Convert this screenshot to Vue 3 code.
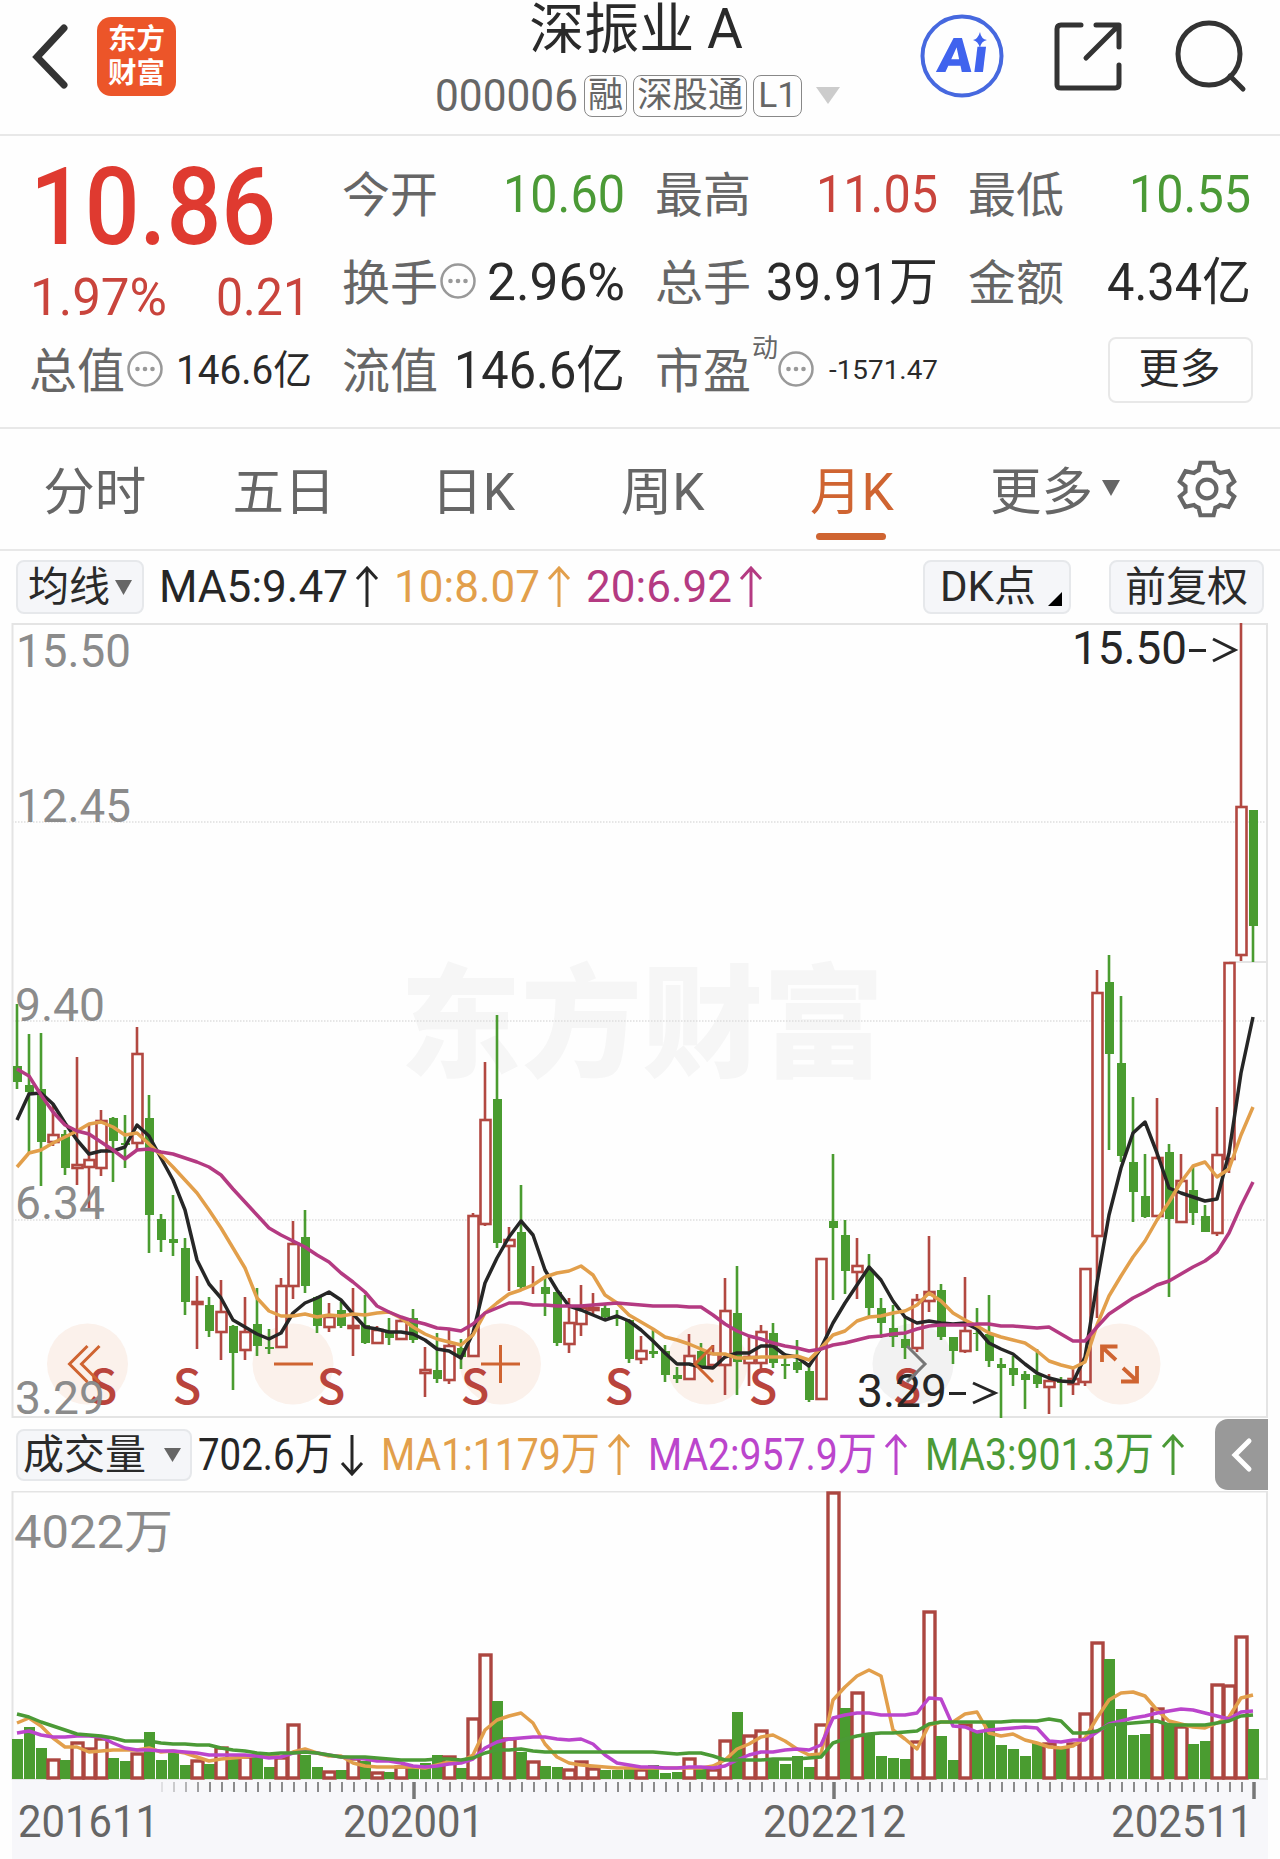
<script setup>
import { h } from 'vue';

// single line of text squeezed to an exact width
const FitText = (props) =>
  h('svg', { width: props.w, height: props.size * 1.2, class: 'fit' }, [
    h(
      'text',
      {
        x: 0,
        y: props.size * 0.955,
        'font-size': props.size,
        'font-weight': props.weight || 400,
        textLength: props.w,
        lengthAdjust: 'spacingAndGlyphs',
        fill: 'currentColor',
      },
      props.text
    ),
  ]);
FitText.props = ['text', 'w', 'size', 'weight'];

const Arrow = (props) =>
  h('svg', { width: 24, height: 42, viewBox: '0 0 24 42', class: 'arrow' }, [
    h('path', {
      d: props.down ? 'M12 1V39M2 29L12 40L22 29' : 'M12 41V3M2 13L12 2L22 13',
      fill: 'none',
      stroke: 'currentColor',
      'stroke-width': 3,
    }),
  ]);
Arrow.props = { down: Boolean };

const tabs = ['分时', '五日', '日K', '周K', '月K'];

const columns = [
  [
    { label: '今开', value: '10.60', w: 122, tone: 'green' },
    { label: '换手', value: '2.96%', w: 138, dots: true },
    { label: '流值', value: '146.6亿', w: 171 },
  ],
  [
    { label: '最高', value: '11.05', w: 122, tone: 'red' },
    { label: '总手', value: '39.91万', w: 172 },
    { label: '市盈', sup: '动', value: '-1571.47', w: 109, size: 26, dots: true },
  ],
  [
    { label: '最低', value: '10.55', w: 122, tone: 'green' },
    { label: '金额', value: '4.34亿', w: 144 },
    { more: true },
  ],
];

const averages = [
  { text: 'MA5:9.47', w: 189, tone: 'black' },
  { text: '10:8.07', w: 146, tone: 'orange' },
  { text: '20:6.92', w: 146, tone: 'magenta' },
];

const volumes = [
  { text: '702.6万', w: 135, tone: 'black', down: true },
  { text: 'MA1:1179万', w: 219, tone: 'orange' },
  { text: 'MA2:957.9万', w: 229, tone: 'purple' },
  { text: 'MA3:901.3万', w: 229, tone: 'green' },
];

// up (1) / down (0), high, body top, body bottom, low
const candles = [
  [0, 1004, 1066, 1082, 1089], [0, 1034, 1085, 1092, 1153], [0, 1033, 1089, 1142, 1186], [1, 1104, 1135, 1142, 1146],
  [0, 1130, 1134, 1168, 1175], [1, 1057, 1165, 1168, 1185], [1, 1125, 1160, 1167, 1210], [1, 1110, 1121, 1168, 1176],
  [0, 1117, 1118, 1141, 1182], [0, 1115, 1143, 1145, 1168], [1, 1027, 1054, 1143, 1150], [0, 1095, 1118, 1215, 1253],
  [0, 1214, 1219, 1240, 1252], [0, 1195, 1239, 1243, 1256], [0, 1238, 1248, 1302, 1315], [1, 1276, 1302, 1304, 1349],
  [0, 1297, 1305, 1331, 1337], [1, 1280, 1312, 1332, 1360], [0, 1325, 1326, 1353, 1390], [1, 1297, 1332, 1350, 1360],
  [0, 1288, 1324, 1346, 1356], [0, 1329, 1347, 1349, 1354], [1, 1278, 1286, 1347, 1348], [1, 1221, 1244, 1286, 1299],
  [0, 1210, 1237, 1286, 1293], [0, 1296, 1297, 1326, 1333], [1, 1303, 1317, 1327, 1332], [0, 1302, 1310, 1326, 1328],
  [1, 1288, 1326, 1328, 1356], [0, 1295, 1325, 1343, 1344], [1, 1326, 1330, 1343, 1344], [0, 1318, 1333, 1338, 1345],
  [1, 1318, 1321, 1339, 1339], [0, 1309, 1318, 1340, 1343], [1, 1347, 1370, 1373, 1397], [0, 1333, 1370, 1379, 1383],
  [1, 1329, 1346, 1380, 1384], [0, 1339, 1348, 1357, 1369], [1, 1213, 1216, 1356, 1357], [1, 1062, 1120, 1224, 1226],
  [0, 1015, 1099, 1243, 1248], [1, 1227, 1240, 1246, 1291], [0, 1185, 1232, 1287, 1290], [1, 1266, 1286, 1286, 1294],
  [0, 1277, 1287, 1294, 1316], [0, 1290, 1292, 1343, 1346], [1, 1298, 1323, 1344, 1353], [1, 1285, 1308, 1324, 1336],
  [1, 1293, 1308, 1310, 1315], [0, 1303, 1308, 1317, 1320], [0, 1310, 1317, 1319, 1326], [0, 1319, 1320, 1359, 1363],
  [1, 1336, 1351, 1359, 1364], [0, 1328, 1351, 1354, 1358], [0, 1345, 1351, 1375, 1382], [0, 1367, 1375, 1379, 1383],
  [1, 1334, 1356, 1379, 1380], [0, 1343, 1351, 1366, 1367], [1, 1345, 1354, 1365, 1368], [1, 1278, 1311, 1365, 1395],
  [0, 1266, 1313, 1362, 1395], [1, 1335, 1357, 1363, 1386], [1, 1325, 1332, 1363, 1370], [0, 1323, 1333, 1363, 1368],
  [0, 1353, 1364, 1366, 1379], [0, 1340, 1362, 1370, 1373], [0, 1365, 1371, 1400, 1402], [1, 1258, 1259, 1399, 1400],
  [0, 1154, 1221, 1228, 1300], [0, 1220, 1235, 1271, 1294], [1, 1238, 1266, 1272, 1299], [0, 1254, 1270, 1308, 1316],
  [0, 1298, 1308, 1323, 1338], [0, 1305, 1328, 1337, 1347], [0, 1317, 1339, 1348, 1359], [1, 1294, 1300, 1348, 1352],
  [1, 1236, 1292, 1301, 1312], [0, 1284, 1290, 1337, 1340], [0, 1337, 1337, 1351, 1364], [1, 1277, 1331, 1351, 1353],
  [0, 1308, 1333, 1334, 1351], [0, 1295, 1334, 1361, 1367], [0, 1358, 1364, 1368, 1418], [0, 1356, 1368, 1375, 1386],
  [0, 1371, 1374, 1380, 1409], [0, 1349, 1375, 1384, 1388], [1, 1374, 1381, 1387, 1414], [0, 1377, 1381, 1383, 1407],
  [1, 1368, 1379, 1384, 1395], [1, 1268, 1269, 1382, 1386], [1, 970, 993, 1236, 1318], [0, 955, 982, 1054, 1150],
  [0, 996, 1063, 1156, 1162], [0, 1097, 1162, 1192, 1222], [0, 1154, 1196, 1217, 1218], [1, 1098, 1158, 1216, 1217],
  [0, 1144, 1152, 1219, 1297], [1, 1154, 1181, 1222, 1222], [0, 1167, 1190, 1213, 1225], [0, 1205, 1216, 1232, 1232],
  [1, 1107, 1155, 1233, 1236], [1, 962, 963, 1159, 1173], [1, 623, 807, 955, 961], [0, 810, 810, 926, 962],
];

const ma5 = [
  1120, 1094, 1093, 1104, 1123, 1140, 1154, 1151, 1151, 1147, 1125, 1136, 1158, 1180, 1210, 1260, 1284, 1298, 1320, 1327,
  1334, 1339, 1333, 1313, 1303, 1298, 1292, 1300, 1314, 1327, 1329, 1332, 1332, 1334, 1340, 1349, 1351, 1358, 1333, 1283,
  1258, 1237, 1221, 1235, 1270, 1290, 1306, 1310, 1315, 1320, 1316, 1321, 1330, 1341, 1353, 1364, 1364, 1367, 1368, 1357,
  1353, 1353, 1346, 1346, 1355, 1357, 1366, 1348, 1323, 1303, 1285, 1267, 1280, 1301, 1317, 1323, 1321, 1323, 1324, 1323,
  1329, 1343, 1349, 1354, 1364, 1373, 1378, 1381, 1382, 1357, 1283, 1215, 1168, 1133, 1122, 1153, 1188, 1193, 1197, 1201,
  1199, 1153, 1073, 1017,
];
const ma10 = [
  1167, 1153, 1150, 1143, 1137, 1131, 1124, 1122, 1127, 1135, 1133, 1144, 1155, 1167, 1180, 1193, 1210, 1228, 1248, 1268,
  1298, 1311, 1316, 1316, 1314, 1317, 1315, 1316, 1314, 1315, 1313, 1312, 1318, 1327, 1334, 1339, 1342, 1345, 1335, 1313,
  1303, 1294, 1290, 1285, 1277, 1273, 1271, 1266, 1275, 1295, 1303, 1315, 1322, 1329, 1337, 1340, 1344, 1349, 1354, 1354,
  1358, 1358, 1357, 1357, 1357, 1356, 1360, 1348, 1335, 1331, 1321, 1317, 1316, 1313, 1311, 1305, 1293, 1301, 1313, 1320,
  1326, 1333, 1337, 1340, 1343, 1351, 1361, 1365, 1368, 1362, 1325, 1296, 1276, 1257, 1241, 1220, 1202, 1182, 1166, 1162,
  1177, 1169, 1135, 1107,
];
const ma20 = [
  1069, 1076, 1095, 1112, 1125, 1131, 1134, 1142, 1150, 1159, 1150, 1149, 1152, 1154, 1158, 1162, 1167, 1175, 1189, 1202,
  1215, 1228, 1235, 1241, 1247, 1255, 1262, 1273, 1282, 1292, 1306, 1312, 1317, 1321, 1324, 1328, 1329, 1331, 1324, 1313,
  1308, 1303, 1303, 1305, 1305, 1306, 1306, 1306, 1305, 1304, 1303, 1304, 1305, 1306, 1306, 1306, 1307, 1307, 1315, 1324,
  1331, 1336, 1339, 1343, 1346, 1348, 1351, 1349, 1345, 1343, 1340, 1337, 1336, 1334, 1333, 1329, 1326, 1325, 1325, 1325,
  1324, 1324, 1326, 1326, 1327, 1328, 1327, 1334, 1341, 1341, 1327, 1314, 1306, 1298, 1292, 1285, 1281, 1274, 1267, 1261,
  1252, 1233, 1206, 1182,
];

const volumeTops = [
  1739, 1727, 1748, 1760, 1760, 1743, 1749, 1739, 1758, 1761, 1754, 1732, 1760, 1753, 1765, 1761, 1764, 1748, 1757, 1757,
  1756, 1767, 1758, 1725, 1755, 1767, 1772, 1770, 1759, 1761, 1773, 1772, 1767, 1768, 1763, 1755, 1757, 1768, 1719, 1655,
  1701, 1739, 1752, 1762, 1766, 1767, 1770, 1762, 1769, 1770, 1770, 1769, 1770, 1765, 1773, 1772, 1759, 1766, 1770, 1741,
  1712, 1736, 1731, 1758, 1764, 1756, 1767, 1725, 1493, 1708, 1693, 1733, 1756, 1758, 1759, 1742, 1612, 1736, 1760, 1725,
  1732, 1721, 1745, 1749, 1756, 1743, 1744, 1748, 1744, 1714, 1643, 1659, 1709, 1735, 1734, 1709, 1723, 1727, 1744, 1741,
  1685, 1686, 1637, 1729,
];
const volumeUp = [
  3, 5, 6, 7, 10, 15, 17, 19, 22, 23, 26, 28, 30, 32, 36, 38, 39, 41, 43, 46, 47, 48, 52, 56, 58, 59, 61, 62, 67, 68, 70,
  75, 76, 79, 86, 88, 89, 90, 95, 97, 100, 101, 102,
];

const vma1 = [
  1723, 1718, 1726, 1738, 1747, 1747, 1752, 1751, 1750, 1750, 1750, 1748, 1752, 1751, 1753, 1757, 1761, 1759, 1758, 1757,
  1755, 1756, 1757, 1752, 1749, 1753, 1756, 1756, 1763, 1766, 1767, 1767, 1767, 1767, 1768, 1765, 1762, 1762, 1755, 1730,
  1720, 1716, 1713, 1723, 1744, 1757, 1763, 1765, 1766, 1767, 1768, 1768, 1768, 1768, 1768, 1768, 1768, 1768, 1766, 1760,
  1749, 1744, 1737, 1735, 1741, 1749, 1755, 1754, 1700, 1687, 1676, 1670, 1676, 1730, 1739, 1749, 1725, 1722, 1722, 1714,
  1712, 1733, 1736, 1734, 1740, 1743, 1747, 1748, 1746, 1738, 1718, 1700, 1693, 1692, 1696, 1710, 1721, 1724, 1727, 1728,
  1723, 1717, 1698, 1695,
];
const vma2 = [
  1733, 1731, 1735, 1737, 1737, 1736, 1736, 1737, 1743, 1748, 1750, 1750, 1751, 1751, 1752, 1753, 1755, 1755, 1755, 1755,
  1756, 1758, 1757, 1753, 1752, 1753, 1755, 1757, 1758, 1759, 1761, 1761, 1763, 1766, 1767, 1766, 1764, 1763, 1759, 1748,
  1742, 1739, 1738, 1737, 1737, 1739, 1740, 1739, 1744, 1755, 1763, 1765, 1767, 1767, 1768, 1768, 1767, 1767, 1768, 1766,
  1760, 1755, 1752, 1752, 1750, 1749, 1750, 1745, 1718, 1715, 1713, 1713, 1715, 1715, 1715, 1713, 1698, 1699, 1726, 1727,
  1732, 1730, 1729, 1728, 1727, 1728, 1741, 1742, 1740, 1740, 1732, 1724, 1721, 1718, 1716, 1713, 1711, 1709, 1710, 1713,
  1716, 1719, 1712, 1711,
];
const vma3 = [
  1714, 1717, 1722, 1726, 1730, 1734, 1735, 1736, 1738, 1741, 1741, 1741, 1743, 1744, 1744, 1745, 1745, 1748, 1750, 1751,
  1753, 1754, 1753, 1753, 1752, 1753, 1755, 1757, 1757, 1757, 1758, 1759, 1760, 1760, 1760, 1759, 1759, 1760, 1758, 1753,
  1750, 1750, 1749, 1751, 1752, 1752, 1752, 1752, 1752, 1752, 1752, 1752, 1752, 1752, 1753, 1754, 1753, 1753, 1756, 1760,
  1760, 1760, 1760, 1759, 1759, 1759, 1758, 1757, 1743, 1739, 1736, 1734, 1733, 1733, 1732, 1731, 1724, 1722, 1722, 1722,
  1722, 1722, 1722, 1721, 1721, 1721, 1719, 1721, 1733, 1733, 1731, 1725, 1724, 1723, 1722, 1721, 1725, 1725, 1725, 1725,
  1723, 1721, 1716, 1715,
];

const px = (i) => 17 + 12 * i;
const line = (ys) => ys.map((y, i) => `${px(i)},${y}`).join(' ');

const priceLines = [
  { tone: 'black', points: line(ma5) },
  { tone: 'orange', points: line(ma10) },
  { tone: 'magenta', points: line(ma20) },
];
const volumeLines = [
  { tone: 'orange', points: line(vma1) },
  { tone: 'purple', points: line(vma2) },
  { tone: 'green', points: line(vma3) },
];

const scale = [
  { text: '15.50', x: 16, y: 667, w: 115 },
  { text: '12.45', x: 16, y: 822, w: 115 },
  { text: '9.40', x: 15, y: 1021, w: 90 },
  { text: '6.34', x: 15, y: 1219, w: 90 },
  { text: '3.29', x: 15, y: 1414, w: 90 },
];
const sells = [103, 187, 331, 475, 619, 763, 907];
const knobs = [87.5, 293, 500.5, 707, 913, 1120];

const ticks = [];
for (let i = 12; i < 104; i++) {
  ticks.push({
    x: px(i) + 1,
    major: [33, 68, 103].includes(i),
    opacity: Math.min(1, (i - 11) / 5),
  });
}
const dates = [
  { text: '201611', x: 18, w: 141 },
  { text: '202001', x: 343, w: 141 },
  { text: '202212', x: 763, w: 143 },
  { text: '202511', x: 1111, w: 142 },
];
</script>

<template>
  <div class="page">
    <header class="header">
      <div class="side">
        <svg class="back" width="44" height="70" viewBox="0 0 44 70">
          <path d="M37 7L10 36L37 64" />
        </svg>
        <div class="logo"><span>东方</span><span>财富</span></div>
      </div>
      <div class="title">
        <div class="name">深振业 A</div>
        <div class="code">
          <FitText text="000006" :w="143" :size="44" />
          <span class="badge">融</span>
          <span class="badge">深股通</span>
          <span class="badge">L1</span>
          <svg class="caret" width="24" height="17"><path d="M0 0H24L12 17Z" /></svg>
        </div>
      </div>
      <div class="tools">
        <svg width="84" height="86" viewBox="0 0 84 86">
          <circle class="ai-ring" cx="42" cy="43" r="39.5" />
          <g transform="translate(16 59) skewX(-7)">
            <text class="ai" textLength="50" lengthAdjust="spacingAndGlyphs">Aı</text>
          </g>
          <path class="ai-star" d="M60 19Q61 26 67 27Q61 28 60 35Q58 28 53 27Q58 26 60 19Z" />
        </svg>
        <svg class="share" width="72" height="72" viewBox="0 0 72 72">
          <path d="M29 5H9Q5 5 5 9V65Q5 68 9 68H63Q67 68 67 64V45M44 5H67V27M66 6L34 38" />
        </svg>
        <svg class="search" width="76" height="76" viewBox="0 0 76 76">
          <circle cx="37" cy="35" r="31" />
          <path d="M58 57L71 70" />
        </svg>
      </div>
    </header>

    <section class="quote">
      <div class="main">
        <div class="price"><FitText text="10.86" :w="246" :size="107" :weight="500" /></div>
        <div class="change">
          <FitText text="1.97%" :w="137" :size="52" />
          <FitText text="0.21" :w="94" :size="52" />
        </div>
        <div class="cell total">
          <span class="label">总值</span>
          <svg class="dots" width="38" height="38" viewBox="0 0 38 38">
            <circle class="ring" cx="19" cy="19" r="16.5" />
            <circle cx="11.5" cy="19" r="2.3" /><circle cx="19" cy="19" r="2.3" /><circle cx="26.5" cy="19" r="2.3" />
          </svg>
          <FitText class="value" text="146.6亿" :w="136" :size="40" />
        </div>
      </div>
      <div v-for="(col, c) in columns" :key="c" class="col">
        <div v-for="(item, r) in col" :key="r" class="cell">
          <button v-if="item.more" class="more">更多</button>
          <template v-else>
            <span class="label">{{ item.label }}</span>
            <span v-if="item.sup" class="sup">{{ item.sup }}</span>
            <svg v-if="item.dots" class="dots" width="38" height="38" viewBox="0 0 38 38">
              <circle class="ring" cx="19" cy="19" r="16.5" />
              <circle cx="11.5" cy="19" r="2.3" /><circle cx="19" cy="19" r="2.3" /><circle cx="26.5" cy="19" r="2.3" />
            </svg>
            <FitText class="value" :class="item.tone" :text="item.value" :w="item.w" :size="item.size || 51" />
          </template>
        </div>
      </div>
    </section>

    <nav class="tabs">
      <div v-for="tab in tabs" :key="tab" class="tab" :class="{ active: tab === '月K' }">{{ tab }}</div>
      <div class="tab">
        更多
        <svg class="small-caret" width="18" height="16"><path d="M0 0H18L9 16Z" /></svg>
      </div>
      <div class="tab">
        <svg class="gear" width="60" height="62" viewBox="-32 -31 64 62">
          <path
            d="M-7 -28H7L9 -20Q12 -19 14 -17L23 -19L29 -8L23 -3V3L29 8L23 19L14 17Q12 19 9 20L7 28H-7L-9 20Q-12 19 -14 17L-23 19L-29 8L-23 3V-3L-29 -8L-23 -19L-14 -17Q-12 -19 -9 -20Z"
          />
          <circle r="10" />
        </svg>
      </div>
    </nav>

    <div class="indicators">
      <div class="chip line-chip">
        均线<svg class="small-caret" width="17" height="15"><path d="M0 0H17L8.5 15Z" /></svg>
      </div>
      <div v-for="item in averages" :key="item.text" class="reading" :class="item.tone">
        <FitText :text="item.text" :w="item.w" :size="45" /><Arrow />
      </div>
      <div class="chip dk-chip">
        DK点<svg class="corner" width="14" height="14"><path d="M14 0V14H0Z" /></svg>
      </div>
      <div class="chip fq-chip">前复权</div>
    </div>

    <svg class="chart" width="1280" height="795" viewBox="0 623 1280 795">
      <text class="watermark" x="400" y="1067" textLength="484" lengthAdjust="spacingAndGlyphs">东方财富</text>
      <path class="grid" d="M12 822H1267M12 1021H1267M12 1220H1267" />
      <path class="frame" d="M12.5 624H1267V1417H12.5ZM1229 962H1267" />
      <circle v-for="(x, i) in knobs" :key="x" :class="i === 4 ? 'knob-off' : 'knob'" :cx="x" cy="1364" r="40.5" />
      <text v-for="x in sells" :key="x" class="sell" :x="x" y="1404">S</text>
      <g v-for="(c, i) in candles" :key="i" :class="c[0] ? 'up' : 'down'">
        <path :d="`M${px(i)} ${c[1]}V${c[2]}M${px(i)} ${c[3]}V${c[4]}`" />
        <rect v-if="c[0]" :x="px(i) - 4.5" :y="c[2]" width="10" :height="c[3] - c[2]" />
        <rect v-else :x="px(i) - 4" :y="c[2]" width="9" :height="Math.max(1, c[3] - c[2])" />
      </g>
      <polyline v-for="l in priceLines" :key="l.tone" class="ma" :class="l.tone" :points="l.points" />
      <text
        v-for="s in scale"
        :key="s.text"
        class="scale"
        :x="s.x"
        :y="s.y"
        :textLength="s.w"
        lengthAdjust="spacingAndGlyphs"
      >{{ s.text }}</text>
      <text class="mark" x="1072" y="664" textLength="115" lengthAdjust="spacingAndGlyphs">15.50</text>
      <text class="mark" x="857" y="1407" textLength="90" lengthAdjust="spacingAndGlyphs">3.29</text>
      <path class="mark-arrow" d="M1189 650.5H1206M1213 639L1235 650L1213 661M949 1393.5H966M973 1383L995 1393L973 1403" />
      <path
        class="knob-icon"
        d="M87.5 1346L69.5 1364L87.5 1382M99.5 1346L81.5 1364L99.5 1382M274 1364H313M481 1364H520M500.5 1345V1383M713 1346L695 1364L713 1382"
      />
      <path class="knob-icon thick" d="M1117.5 1346.5H1102V1362M1102 1347L1116 1360M1121 1381.5H1137V1366M1137 1381L1123 1368" />
      <path class="knob-icon off" d="M907 1346L925 1364L907 1382" />
    </svg>

    <div class="indicators volume-head">
      <div class="chip volume-chip">
        成交量<svg class="small-caret" width="17" height="14"><path d="M0 0H17L8.5 14Z" /></svg>
      </div>
      <div v-for="item in volumes" :key="item.text" class="reading" :class="item.tone">
        <FitText :text="item.text" :w="item.w" :size="45" /><Arrow :down="item.down" />
      </div>
      <div class="fold">
        <svg width="22" height="36" viewBox="0 0 22 36"><path d="M18 4L4 18L18 32" /></svg>
      </div>
    </div>

    <svg class="chart" width="1280" height="368" viewBox="0 1491 1280 368">
      <rect class="axis" x="12" y="1779" width="1256" height="80" />
      <path class="frame" d="M12.5 1779V1491.5H1267V1779Z" />
      <text class="scale" x="14" y="1548" textLength="159" lengthAdjust="spacingAndGlyphs">4022万</text>
      <g v-for="(y, i) in volumeTops" :key="i" :class="volumeUp.includes(i) ? 'vol-up' : 'down'">
        <rect v-if="volumeUp.includes(i)" :x="px(i) - 5" :y="y" width="11" :height="1778 - y" />
        <rect v-else :x="px(i) - 5" :y="y" width="11" :height="1779 - y" />
      </g>
      <polyline v-for="l in volumeLines" :key="l.tone" class="ma" :class="l.tone" :points="l.points" />
      <path
        v-for="t in ticks"
        :key="t.x"
        class="tick"
        :class="{ major: t.major }"
        :opacity="t.opacity"
        :d="`M${t.x} 1782V${t.major ? 1799 : 1792}`"
      />
      <text
        v-for="d in dates"
        :key="d.text"
        class="date"
        :x="d.x"
        y="1837"
        :textLength="d.w"
        lengthAdjust="spacingAndGlyphs"
      >{{ d.text }}</text>
    </svg>
  </div>
</template>

<style>
body {
  background: #fefefe;
}
</style>

<style scoped>
.page {
  width: 1280px;
  height: 1859px;
  overflow: hidden;
  color: #2a2a2a;
  font-family: Roboto, 'Noto Sans CJK SC', sans-serif;
}
svg {
  display: block;
  flex: none;
}
.fit {
  overflow: visible;
}

.header {
  box-sizing: border-box;
  height: 136px;
  border-bottom: 2px solid #e8e8e8;
  display: grid;
  grid-template-columns: 435px 1fr 360px;
}
.side {
  display: flex;
  align-items: flex-start;
  padding-left: 27px;
}
.back {
  margin: 21px 26px 0 0;
}
.back path {
  fill: none;
  stroke: #333;
  stroke-width: 7;
  stroke-linecap: round;
}
.logo {
  box-sizing: border-box;
  width: 79px;
  height: 79px;
  margin-top: 17px;
  padding-top: 6px;
  border-radius: 14px;
  background: #ec5529;
  color: #fff;
  font-size: 28.5px;
  font-weight: 700;
  line-height: 34px;
  display: flex;
  flex-direction: column;
  align-items: center;
}
.name {
  width: 402px;
  height: 60px;
  font-size: 55px;
  line-height: 59px;
  text-align: center;
  word-spacing: -1px;
}
.code {
  display: flex;
  align-items: center;
  height: 71px;
  color: #666;
}
.title {
  white-space: nowrap;
}
.badge {
  box-sizing: border-box;
  height: 42px;
  margin: 1px 0 0 6px;
  padding: 0 3px;
  border: 1.5px solid #888;
  border-radius: 8px;
  font-size: 35.3px;
  line-height: 38px;
}
.badge:nth-child(4) {
  padding: 0 4px;
}
.caret {
  margin-left: 14px;
}
.caret path {
  fill: #ccc;
}
.tools {
  display: flex;
  align-items: flex-start;
  padding-top: 13px;
}
.ai-ring {
  fill: none;
  stroke: #4668df;
  stroke-width: 4;
}
.ai {
  fill: #4063ee;
  font: 900 48px Roboto, sans-serif;
}
.ai-star {
  fill: #4063ee;
}
.share {
  margin: 7px 0 0 48px;
}
.search {
  margin: 6px 0 0 48px;
}
.share path,
.search path,
.search circle {
  fill: none;
  stroke: #333;
  stroke-width: 5;
  stroke-linecap: round;
  stroke-linejoin: round;
}

.quote {
  box-sizing: border-box;
  height: 293px;
  padding: 14px 0 0 30px;
  border-bottom: 2px solid #e8e8e8;
  display: grid;
  grid-template-columns: repeat(4, 282px);
  gap: 31px;
}
.price {
  height: 113px;
  display: flex;
  align-items: center;
  color: #df3a30;
}
.change {
  height: 67px;
  display: flex;
  align-items: center;
  justify-content: space-between;
  padding-right: 2px;
  color: #c9443c;
}
.cell {
  height: 88px;
  display: flex;
  align-items: center;
  position: relative;
}
.total {
  height: 80px;
}
.label {
  margin: 3px 0 0 -1px;
  color: #666;
  font-size: 48px;
  line-height: 60px;
}
.sup {
  align-self: flex-start;
  margin: 1px -2px 0 1px;
  color: #666;
  font-size: 26px;
}
.dots {
  margin: -3px 0 0 1px;
}
.dots circle {
  fill: #999;
}
.dots .ring {
  fill: none;
  stroke: #999;
  stroke-width: 2.5;
}
.value {
  margin-left: auto;
}
.more {
  box-sizing: border-box;
  width: 145px;
  height: 66px;
  margin: 0 -2px 0 auto;
  padding: 0 2px 3px 0;
  border: 2px solid #e8e8e8;
  border-radius: 8px;
  background: none;
  color: #2a2a2a;
  font: 41px/58px Roboto, 'Noto Sans CJK SC', sans-serif;
}

.tabs {
  box-sizing: border-box;
  height: 122px;
  border-bottom: 2px solid #e8e8e8;
  display: grid;
  grid-template-columns: repeat(5, 189.3px) 217px 88px;
}
.tab {
  display: flex;
  align-items: center;
  justify-content: center;
  position: relative;
  padding-bottom: 3px;
  color: #666;
  font-size: 51.5px;
}
.tab:last-child {
  padding-bottom: 0;
}
.tab.active {
  color: #cf6431;
}
.tab.active::after {
  content: '';
  position: absolute;
  left: 59px;
  bottom: 9px;
  width: 70px;
  height: 7px;
  border-radius: 4px;
  background: #cf6431;
}
.small-caret {
  margin-left: 9px;
}
.small-caret path {
  fill: #666;
}
.gear path,
.gear circle {
  fill: none;
  stroke: #666;
  stroke-width: 4.5;
}

.indicators {
  height: 72px;
  display: flex;
  align-items: center;
  padding: 0 16px;
}
.chip {
  box-sizing: border-box;
  height: 54px;
  border: 2px solid #e6e8eb;
  border-radius: 8px;
  background: #f5f6f9;
  display: flex;
  align-items: center;
  font-size: 41px;
  line-height: 46px;
  white-space: nowrap;
}
.line-chip {
  width: 128px;
  margin-right: 15px;
  padding-left: 10px;
}
.line-chip .small-caret {
  margin-left: 5px;
}
.reading {
  display: flex;
  align-items: center;
  margin-right: 15px;
  padding-bottom: 2px;
}
.reading .arrow {
  margin: 2px 0 0 7px;
}
.dk-chip {
  width: 148px;
  margin-left: auto;
  padding-left: 15px;
  font-size: 42px;
}
.corner {
  margin: 24px 0 0 12px;
}
.fq-chip {
  width: 155px;
  margin-left: 38px;
  justify-content: center;
}
.volume-head {
  height: 73px;
  padding-right: 12px;
}
.volume-chip {
  width: 176px;
  height: 52px;
  margin-right: 6px;
  padding-left: 5px;
}
.volume-chip .small-caret {
  margin-left: 18px;
}
.volume-head .reading {
  margin-right: 17px;
}
.fold {
  width: 53px;
  height: 71px;
  margin-left: auto;
  border-radius: 13px 0 0 13px;
  background: #999;
  display: flex;
  align-items: center;
  justify-content: center;
}
.fold path {
  fill: none;
  stroke: #fff;
  stroke-width: 5;
  stroke-linecap: round;
}

.black {
  color: #262626;
}
.orange {
  color: #e29f4b;
}
.magenta {
  color: #b43a82;
}
.purple {
  color: #bb45cc;
}
.green {
  color: #4b9a36;
}
.red {
  color: #c9443c;
}

.watermark {
  fill: #f6f6f6;
  font-size: 122px;
  font-weight: 900;
}
.grid {
  stroke: #dedede;
  stroke-width: 1.5;
  stroke-dasharray: 1.5 1.5;
}
.frame {
  fill: none;
  stroke: #e4e4e4;
  stroke-width: 2;
}
.up path,
.up rect {
  fill: #fefefe;
  stroke: #b24841;
  stroke-width: 2.6;
}
.down path {
  stroke: #4a9c30;
  stroke-width: 2.6;
}
.down rect {
  fill: #4a9c30;
}
.vol-up rect {
  fill: #fefefe;
  stroke: #ac4640;
  stroke-width: 3.4;
}
.ma {
  fill: none;
  stroke: currentColor;
  stroke-width: 3.5;
  stroke-linejoin: round;
}
.scale {
  fill: #8b8b8b;
  font-size: 47px;
}
.mark {
  fill: #262626;
  font-size: 46px;
}
.mark-arrow {
  fill: none;
  stroke: #262626;
  stroke-width: 3;
}
.sell {
  fill: #b9443c;
  font-family: 'Noto Sans CJK SC', sans-serif;
  font-size: 47px;
  font-weight: 500;
  text-anchor: middle;
}
.knob {
  fill: #fbf1eb;
}
.knob-off {
  fill: #f2f2f2;
}
.knob-icon {
  fill: none;
  stroke: #cf6431;
  stroke-width: 3;
}
.knob-icon.thick {
  stroke-width: 3.8;
}
.knob-icon.off {
  stroke: #777;
}
.axis {
  fill: #f7f7fa;
}
.tick {
  stroke: #777;
  stroke-width: 1.7;
}
.tick.major {
  stroke-width: 3.5;
}
.date {
  fill: #666;
  font-size: 44px;
}
</style>
